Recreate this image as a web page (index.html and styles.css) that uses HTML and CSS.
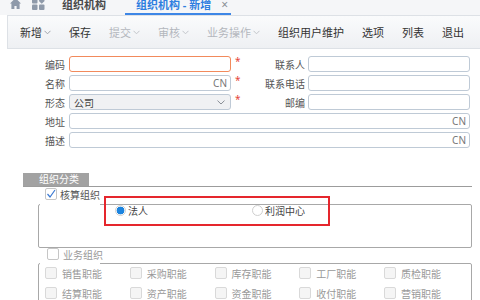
FILE: index.html
```html
<!DOCTYPE html>
<html lang="zh-CN">

<head>
    <meta charset="UTF-8">
    <title>组织机构 - 新增</title>
    <link rel="stylesheet" href="styles.css">
</head>

<body>
    <div class="tabbar">
        <span class="tb-icon home">
            <svg width="11" height="10" viewBox="0 0 11 10"><path d="M5.5 -2 L11 3.5 H9.6 V9 H6.6 V6 H4.4 V9 H1.4 V3.5 H0 Z" fill="#8f9aaa"/></svg>
        </span>
        <span class="tb-icon apps">
            <svg width="13" height="10" viewBox="0 0 13 10">
                <rect x="0" y="-2" width="5.5" height="5.5" rx="1" fill="#8f9aaa"/>
                <rect x="7.5" y="-1.5" width="4.5" height="4.5" rx="0.8" fill="#8f9aaa" transform="rotate(45 9.75 0.75)"/>
                <rect x="0" y="4.5" width="5.5" height="5.5" rx="1" fill="#8f9aaa"/>
                <rect x="7" y="4.5" width="5.5" height="5.5" rx="1" fill="#8f9aaa"/>
            </svg>
        </span>
        <span class="tab">组织机构</span>
        <span class="tab active">组织机构 - 新增<span class="close">×</span></span>
    </div>

    <div class="toolbar">
        <span class="btn">新增<svg class="chev" width="7" height="5" viewBox="0 0 7 5"><path d="M0.5 0.8 L3.5 3.8 L6.5 0.8" fill="none" stroke="currentColor"/></svg></span>
        <span class="btn">保存</span>
        <span class="btn off">提交<svg class="chev" width="7" height="5" viewBox="0 0 7 5"><path d="M0.5 0.8 L3.5 3.8 L6.5 0.8" fill="none" stroke="currentColor"/></svg></span>
        <span class="btn off">审核<svg class="chev" width="7" height="5" viewBox="0 0 7 5"><path d="M0.5 0.8 L3.5 3.8 L6.5 0.8" fill="none" stroke="currentColor"/></svg></span>
        <span class="sep"></span>
        <span class="btn off">业务操作<svg class="chev" width="7" height="5" viewBox="0 0 7 5"><path d="M0.5 0.8 L3.5 3.8 L6.5 0.8" fill="none" stroke="currentColor"/></svg></span>
        <span class="sep"></span>
        <span class="btn">组织用户维护</span>
        <span class="btn">选项</span>
        <span class="btn">列表</span>
        <span class="btn">退出</span>
    </div>

    <form class="form">
        <label>编码</label>
        <div class="field focus"><input type="text"></div>
        <span class="req">*</span>
        <label class="r">联系人</label>
        <div class="field"><input type="text"></div>

        <label>名称</label>
        <div class="field"><input type="text"><span class="cn">CN</span></div>
        <span class="req">*</span>
        <label class="r">联系电话</label>
        <div class="field"><input type="text"></div>

        <label>形态</label>
        <div class="field sel"><span class="val">公司</span>
            <svg class="chev" width="8" height="5" viewBox="0 0 8 5"><path d="M0.5 0.6 L4 4 L7.5 0.6" fill="none" stroke="#8a8f96"/></svg>
        </div>
        <span class="req">*</span>
        <label class="r">邮编</label>
        <div class="field"><input type="text"></div>

        <label>地址</label>
        <div class="field wide"><input type="text"><span class="cn">CN</span></div>

        <label>描述</label>
        <div class="field wide"><input type="text"><span class="cn">CN</span></div>
    </form>

    <div class="section">
        <div class="section-head"><span>组织分类</span></div>

        <div class="check-line first">
            <span class="cb checked"><svg width="10" height="10" viewBox="0 0 10 10"><path d="M1.5 5 L4 8 L9 1" fill="none" stroke="#3d7bd3" stroke-width="1.2"/></svg></span>
            核算组织
        </div>
        <fieldset class="group">
            <legend></legend>
            <div class="radios">
                <span class="radio on"></span><span class="rl">法人</span>
                <span class="radio second"></span><span class="rl">利润中心</span>
            </div>
        </fieldset>

        <div class="check-line second muted">
            <span class="cb"></span>
            业务组织
        </div>
        <fieldset class="group">
            <legend></legend>
            <div class="duties">
                <span class="duty"><span class="cb off"></span>销售职能</span>
                <span class="duty"><span class="cb off"></span>采购职能</span>
                <span class="duty"><span class="cb off"></span>库存职能</span>
                <span class="duty"><span class="cb off"></span>工厂职能</span>
                <span class="duty"><span class="cb off"></span>质检职能</span>
                <span class="duty"><span class="cb off"></span>结算职能</span>
                <span class="duty"><span class="cb off"></span>资产职能</span>
                <span class="duty"><span class="cb off"></span>资金职能</span>
                <span class="duty"><span class="cb off"></span>收付职能</span>
                <span class="duty"><span class="cb off"></span>营销职能</span>
            </div>
        </fieldset>
    </div>

    <!-- annotation frame drawn over the radio group -->
    <div class="highlight"></div>
</body>

</html>
```

FILE: styles.css
```css
* {
    box-sizing: border-box;
    margin: 0;
    padding: 0;
}

body {
    font-family: "Noto Sans", "Noto Sans CJK SC", sans-serif;
    font-size: 10px;
    color: #555;
    background: #fff;
    width: 480px;
    height: 300px;
    overflow: hidden;
    position: relative;
}

/* Tab strip */
.tabbar {
    display: flex;
    align-items: flex-start;
    height: 15px;
    padding-left: 10px;
    background: #f5f6f8;
    overflow: hidden;
}

.tb-icon {
    display: block;
    height: 10px;
}

.tb-icon svg {
    display: block;
}

.home {
    margin-right: 11px;
}

.apps {
    margin-right: 17px;
}

.tab {
    display: flex;
    height: 15px;
    line-height: 9px;
    font-size: 11px;
    font-weight: bold;
    color: #4a4a4a;
}

.tab.active {
    width: 106px;
    margin-left: 19px;
    padding: 0 3px 0 11px;
    color: #2f7fe0;
    border-bottom: 2px solid #3d86e6;
}

.tab .close {
    margin-left: auto;
    font-weight: normal;
    font-size: 12px;
    color: #8a8f96;
}

/* Toolbar */
.toolbar {
    display: flex;
    align-items: center;
    height: 34px;
    margin-left: 7px;
    padding-left: 12px;
    background: linear-gradient(#fafbfc, #eef0f3);
    border: 1px solid #dde1e6;
    border-right: none;
    font-size: 11px;
    color: #333;
}

.btn {
    display: flex;
    align-items: center;
    margin-right: 18px;
    white-space: nowrap;
}

.btn.off {
    color: #b3b7bd;
}

.btn .chev {
    margin-left: 2px;
    color: #a0a4aa;
}

.btn.off .chev {
    color: #c2c5ca;
}

.sep {
    width: 1px;
    height: 12px;
    background: #bfc3c8;
    margin: 0 11px 0 -11px;
}

/* Form */
.form {
    display: grid;
    grid-template-columns: 65px 166px 14px 63px 162px;
    grid-auto-rows: 16px;
    row-gap: 3px;
    align-items: center;
    margin-top: 7px;
}

.form label {
    text-align: right;
    color: #555;
}

.form label.r {
    padding-right: 3px;
}

.field {
    display: flex;
    align-items: center;
    height: 16px;
    padding: 0 3px 0 4px;
    border: 1px solid #bfcad6;
    border-radius: 3px;
    background: #fff;
}

.form label + .field {
    margin-left: 4px;
}

.form label.r + .field {
    margin-left: 0;
}

.field.wide {
    grid-column: 2 / 6;
}

.field.focus {
    border-color: #f28a5c;
}

.field.sel {
    background: #f0f1f3;
    justify-content: space-between;
    padding-right: 5px;
}

.field.sel .val {
    color: #444;
}

.field input {
    flex: 1;
    min-width: 0;
    height: 14px;
    border: 0;
    outline: 0;
    background: transparent;
    font: inherit;
}

.cn {
    color: #777;
}

.req {
    align-self: start;
    padding-left: 4px;
    line-height: 10px;
    color: #e5473a;
}

/* Classification section */
.section {
    width: 449px;
    margin: 25px 0 0 23px;
}

.section-head {
    height: 14px;
    border-bottom: 1px solid #9c9c9c;
}

.section-head span {
    display: block;
    width: 66px;
    height: 13px;
    line-height: 13px;
    padding-left: 16px;
    background: #a2a2a2;
    color: #fff;
}

.check-line {
    display: flex;
    align-items: center;
    gap: 3px;
    height: 14px;
    color: #555;
}

.check-line.first {
    padding-left: 22px;
}

.check-line.second {
    height: 12px;
    padding-left: 24px;
    gap: 4px;
}

.check-line.muted {
    color: #999;
}

.cb {
    display: flex;
    align-items: center;
    justify-content: center;
    width: 12px;
    height: 12px;
    border: 1px solid #c6c6c6;
    border-radius: 2px;
    background: #fff;
}

.cb.off {
    border-color: #d9d9d9;
    background: #f5f5f5;
}

.group {
    height: 44px;
    margin: 3px 0 0 15px;
    padding: 0 0 0 1px;
    border: 1px solid #a8a8a8;
    border-radius: 2px;
}

.group legend {
    width: 60px;
    height: 0;
    padding: 0;
}

.check-line.second + .group {
    margin-top: 3px;
    height: 60px;
}

.radios {
    display: flex;
    align-items: center;
    height: 11px;
    padding-left: 75px;
}

.radio {
    width: 11px;
    height: 11px;
    border: 1px solid #cfcfcf;
    border-radius: 50%;
    background: #fff;
}

.radio.on {
    border-color: #d0d0d0;
    background: radial-gradient(circle, #1c84df 0 3.6px, #fff 4.2px);
}

.radio.second {
    margin-left: 104px;
}

.rl {
    margin-left: 2px;
    color: #444;
}

.duties {
    display: grid;
    grid-template-columns: repeat(5, 84.75px);
    row-gap: 8px;
    padding: 3px 0 0 5px;
}

.duty {
    display: flex;
    align-items: center;
    gap: 5px;
    height: 12px;
    color: #999;
}

.highlight {
    position: absolute;
    left: 104px;
    top: 196px;
    width: 226px;
    height: 30px;
    border: 2px solid #e5262d;
}
```
